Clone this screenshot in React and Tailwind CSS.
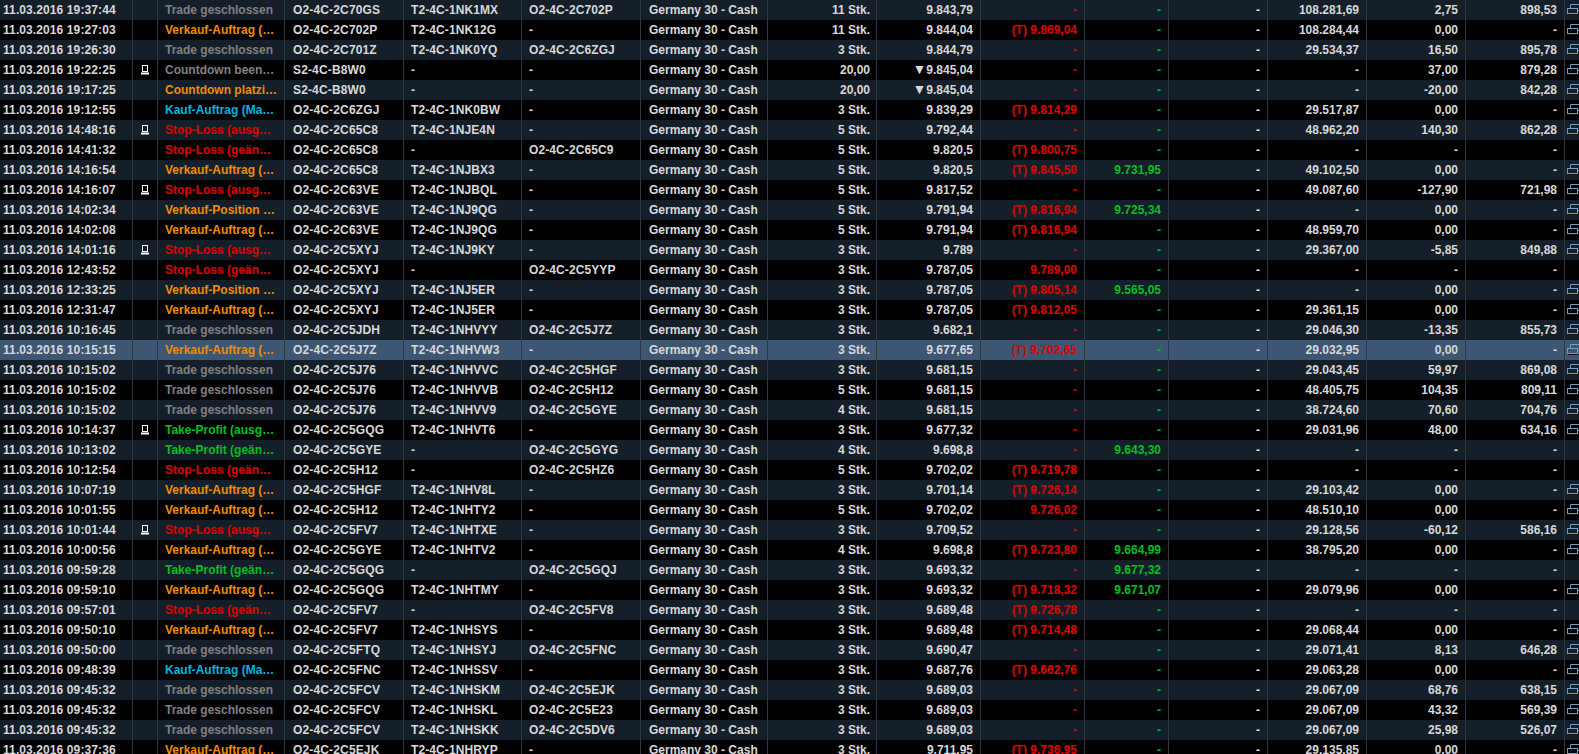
import React from "react";

const statusColors = {
  trade: "text-[#808080]",
  sell: "text-[#f08c00]",
  buy: "text-[#00b4e0]",
  stop: "text-[#e00000]",
  take: "text-[#00c020]",
};

const labels = {
  trade: "Trade geschlossen",
  sell: "Verkauf-Auftrag (…",
  buy: "Kauf-Auftrag (Ma…",
  stopOut: "Stop-Loss (ausg…",
  stopMod: "Stop-Loss (geän…",
  takeOut: "Take-Profit (ausg…",
  takeMod: "Take-Profit (geän…",
  sellPos: "Verkauf-Position …",
};

// time, pc, kind, label, order, trade, linked, qty, price, stop, limit, value, pnl, balance, link
const rows = [
  ["19:37:44", 0, "trade", labels.trade, "O2-4C-2C70GS", "T2-4C-1NK1MX", "O2-4C-2C702P", "11 Stk.", "9.843,79", "-", "-", "108.281,69", "2,75", "898,53", 1],
  ["19:27:03", 0, "sell", labels.sell, "O2-4C-2C702P", "T2-4C-1NK12G", "-", "11 Stk.", "9.844,04", "(T) 9.869,04", "-", "108.284,44", "0,00", "-", 1],
  ["19:26:30", 0, "trade", labels.trade, "O2-4C-2C701Z", "T2-4C-1NK0YQ", "O2-4C-2C6ZGJ", "3 Stk.", "9.844,79", "-", "-", "29.534,37", "16,50", "895,78", 1],
  ["19:22:25", 1, "trade", "Countdown been…", "S2-4C-B8W0", "-", "-", "20,00", "▼9.845,04", "-", "-", "-", "37,00", "879,28", 1],
  ["19:17:25", 0, "sell", "Countdown platzi…", "S2-4C-B8W0", "-", "-", "20,00", "▼9.845,04", "-", "-", "-", "-20,00", "842,28", 1],
  ["19:12:55", 0, "buy", labels.buy, "O2-4C-2C6ZGJ", "T2-4C-1NK0BW", "-", "3 Stk.", "9.839,29", "(T) 9.814,29", "-", "29.517,87", "0,00", "-", 1],
  ["14:48:16", 1, "stop", labels.stopOut, "O2-4C-2C65C8", "T2-4C-1NJE4N", "-", "5 Stk.", "9.792,44", "-", "-", "48.962,20", "140,30", "862,28", 1],
  ["14:41:32", 0, "stop", labels.stopMod, "O2-4C-2C65C8", "-", "O2-4C-2C65C9", "5 Stk.", "9.820,5", "(T) 9.800,75", "-", "-", "-", "-", 0],
  ["14:16:54", 0, "sell", labels.sell, "O2-4C-2C65C8", "T2-4C-1NJBX3", "-", "5 Stk.", "9.820,5", "(T) 9.845,50", "9.731,95", "49.102,50", "0,00", "-", 1],
  ["14:16:07", 1, "stop", labels.stopOut, "O2-4C-2C63VE", "T2-4C-1NJBQL", "-", "5 Stk.", "9.817,52", "-", "-", "49.087,60", "-127,90", "721,98", 1],
  ["14:02:34", 0, "sell", labels.sellPos, "O2-4C-2C63VE", "T2-4C-1NJ9QG", "-", "5 Stk.", "9.791,94", "(T) 9.816,94", "9.725,34", "-", "0,00", "-", 1],
  ["14:02:08", 0, "sell", labels.sell, "O2-4C-2C63VE", "T2-4C-1NJ9QG", "-", "5 Stk.", "9.791,94", "(T) 9.816,94", "-", "48.959,70", "0,00", "-", 1],
  ["14:01:16", 1, "stop", labels.stopOut, "O2-4C-2C5XYJ", "T2-4C-1NJ9KY", "-", "3 Stk.", "9.789", "-", "-", "29.367,00", "-5,85", "849,88", 1],
  ["12:43:52", 0, "stop", labels.stopMod, "O2-4C-2C5XYJ", "-", "O2-4C-2C5YYP", "3 Stk.", "9.787,05", "9.789,00", "-", "-", "-", "-", 0],
  ["12:33:25", 0, "sell", labels.sellPos, "O2-4C-2C5XYJ", "T2-4C-1NJ5ER", "-", "3 Stk.", "9.787,05", "(T) 9.805,14", "9.565,05", "-", "0,00", "-", 1],
  ["12:31:47", 0, "sell", labels.sell, "O2-4C-2C5XYJ", "T2-4C-1NJ5ER", "-", "3 Stk.", "9.787,05", "(T) 9.812,05", "-", "29.361,15", "0,00", "-", 1],
  ["10:16:45", 0, "trade", labels.trade, "O2-4C-2C5JDH", "T2-4C-1NHVYY", "O2-4C-2C5J7Z", "3 Stk.", "9.682,1", "-", "-", "29.046,30", "-13,35", "855,73", 1],
  ["10:15:15", 0, "sell", labels.sell, "O2-4C-2C5J7Z", "T2-4C-1NHVW3", "-", "3 Stk.", "9.677,65", "(T) 9.702,65", "-", "29.032,95", "0,00", "-", 1],
  ["10:15:02", 0, "trade", labels.trade, "O2-4C-2C5J76", "T2-4C-1NHVVC", "O2-4C-2C5HGF", "3 Stk.", "9.681,15", "-", "-", "29.043,45", "59,97", "869,08", 1],
  ["10:15:02", 0, "trade", labels.trade, "O2-4C-2C5J76", "T2-4C-1NHVVB", "O2-4C-2C5H12", "5 Stk.", "9.681,15", "-", "-", "48.405,75", "104,35", "809,11", 1],
  ["10:15:02", 0, "trade", labels.trade, "O2-4C-2C5J76", "T2-4C-1NHVV9", "O2-4C-2C5GYE", "4 Stk.", "9.681,15", "-", "-", "38.724,60", "70,60", "704,76", 1],
  ["10:14:37", 1, "take", labels.takeOut, "O2-4C-2C5GQG", "T2-4C-1NHVT6", "-", "3 Stk.", "9.677,32", "-", "-", "29.031,96", "48,00", "634,16", 1],
  ["10:13:02", 0, "take", labels.takeMod, "O2-4C-2C5GYE", "-", "O2-4C-2C5GYG", "4 Stk.", "9.698,8", "-", "9.643,30", "-", "-", "-", 0],
  ["10:12:54", 0, "stop", labels.stopMod, "O2-4C-2C5H12", "-", "O2-4C-2C5HZ6", "5 Stk.", "9.702,02", "(T) 9.719,78", "-", "-", "-", "-", 0],
  ["10:07:19", 0, "sell", labels.sell, "O2-4C-2C5HGF", "T2-4C-1NHV8L", "-", "3 Stk.", "9.701,14", "(T) 9.726,14", "-", "29.103,42", "0,00", "-", 1],
  ["10:01:55", 0, "sell", labels.sell, "O2-4C-2C5H12", "T2-4C-1NHTY2", "-", "5 Stk.", "9.702,02", "9.726,02", "-", "48.510,10", "0,00", "-", 1],
  ["10:01:44", 1, "stop", labels.stopOut, "O2-4C-2C5FV7", "T2-4C-1NHTXE", "-", "3 Stk.", "9.709,52", "-", "-", "29.128,56", "-60,12", "586,16", 1],
  ["10:00:56", 0, "sell", labels.sell, "O2-4C-2C5GYE", "T2-4C-1NHTV2", "-", "4 Stk.", "9.698,8", "(T) 9.723,80", "9.664,99", "38.795,20", "0,00", "-", 1],
  ["09:59:28", 0, "take", labels.takeMod, "O2-4C-2C5GQG", "-", "O2-4C-2C5GQJ", "3 Stk.", "9.693,32", "-", "9.677,32", "-", "-", "-", 0],
  ["09:59:10", 0, "sell", labels.sell, "O2-4C-2C5GQG", "T2-4C-1NHTMY", "-", "3 Stk.", "9.693,32", "(T) 9.718,32", "9.671,07", "29.079,96", "0,00", "-", 1],
  ["09:57:01", 0, "stop", labels.stopMod, "O2-4C-2C5FV7", "-", "O2-4C-2C5FV8", "3 Stk.", "9.689,48", "(T) 9.726,78", "-", "-", "-", "-", 0],
  ["09:50:10", 0, "sell", labels.sell, "O2-4C-2C5FV7", "T2-4C-1NHSYS", "-", "3 Stk.", "9.689,48", "(T) 9.714,48", "-", "29.068,44", "0,00", "-", 1],
  ["09:50:00", 0, "trade", labels.trade, "O2-4C-2C5FTQ", "T2-4C-1NHSYJ", "O2-4C-2C5FNC", "3 Stk.", "9.690,47", "-", "-", "29.071,41", "8,13", "646,28", 1],
  ["09:48:39", 0, "buy", labels.buy, "O2-4C-2C5FNC", "T2-4C-1NHSSV", "-", "3 Stk.", "9.687,76", "(T) 9.662,76", "-", "29.063,28", "0,00", "-", 1],
  ["09:45:32", 0, "trade", labels.trade, "O2-4C-2C5FCV", "T2-4C-1NHSKM", "O2-4C-2C5EJK", "3 Stk.", "9.689,03", "-", "-", "29.067,09", "68,76", "638,15", 1],
  ["09:45:32", 0, "trade", labels.trade, "O2-4C-2C5FCV", "T2-4C-1NHSKL", "O2-4C-2C5E23", "3 Stk.", "9.689,03", "-", "-", "29.067,09", "43,32", "569,39", 1],
  ["09:45:32", 0, "trade", labels.trade, "O2-4C-2C5FCV", "T2-4C-1NHSKK", "O2-4C-2C5DV6", "3 Stk.", "9.689,03", "-", "-", "29.067,09", "25,98", "526,07", 1],
  ["09:37:36", 0, "sell", labels.sell, "O2-4C-2C5EJK", "T2-4C-1NHRYP", "-", "3 Stk.", "9.711,95", "(T) 9.736,95", "-", "29.135,85", "0,00", "-", 1],
];

function ComputerIcon() {
  return (
    <svg width="8" height="10" viewBox="0 0 8 10" className="block">
      <rect x="1.5" y="0.5" width="5" height="6" fill="none" stroke="#ffffff" />
      <rect x="0" y="7.5" width="8" height="2" fill="#ffffff" />
    </svg>
  );
}

function LinkIcon() {
  return (
    <svg width="14" height="12" viewBox="0 0 14 12" className="block">
      <path d="M1 10.5 H11.5" fill="none" stroke="#0b1118" />
      <path d="M3.5 4 V0.5 H14 M14 6.5 H10.5" fill="none" stroke="#6f9fbf" />
      <rect x="0.5" y="4.5" width="10" height="5" fill="none" stroke="#6f9fbf" />
    </svg>
  );
}

function Cell({ className = "", children }) {
  return (
    <div className={`h-5 leading-5 border-r border-[#2d3642] whitespace-nowrap overflow-hidden ${className}`}>
      {children}
    </div>
  );
}

function Price({ value }) {
  if (!value.startsWith("▼")) return value;
  return (
    <>
      <span className="text-[14px] leading-none">▼</span>
      {value.slice(1)}
    </>
  );
}

function Row({ row, index }) {
  const [time, pc, kind, label, order, trade, linked, qty, price, stop, limit, value, pnl, balance, link] = row;
  const bg = index === 17 ? "bg-[#3d5674]" : index % 2 === 0 ? "bg-[#151f29]" : "bg-black";

  return (
    <div className={`grid grid-cols-[133px_25px_127px_119px_118px_119px_127px_109px_104px_104px_84px_99px_99px_99px_99px_15px] ${bg}`}>
      <Cell className="pl-[3px] tracking-[0.1px]">11.03.2016 {time}</Cell>
      <Cell className="pt-[5px] pl-[8px]">{pc ? <ComputerIcon /> : null}</Cell>
      <Cell className={`pl-[7px] ${statusColors[kind]}`}>{label}</Cell>
      <Cell className="pl-2 tracking-[0.15px]">{order}</Cell>
      <Cell className="pl-[7px] tracking-[0.1px]">{trade}</Cell>
      <Cell className="pl-[7px] tracking-[0.1px]">{linked}</Cell>
      <Cell className="pl-[8px]">Germany 30 - Cash</Cell>
      <Cell className="pr-[6px] text-right">{qty}</Cell>
      <Cell className="pr-[7px] text-right"><Price value={price} /></Cell>
      <Cell className="pr-[7px] text-right text-[#e00000]">{stop}</Cell>
      <Cell className="pr-[7px] text-right text-[#00c020]">{limit}</Cell>
      <Cell className="pr-[7px] text-right">-</Cell>
      <Cell className="pr-[7px] text-right">{value}</Cell>
      <Cell className="pr-[7px] text-right">{pnl}</Cell>
      <Cell className="pr-[7px] text-right">{balance}</Cell>
      <div className="h-5 pl-[2px] pt-1 overflow-hidden">{link ? <LinkIcon /> : null}</div>
    </div>
  );
}

export default function App() {
  return (
    <div className="h-screen overflow-hidden bg-black text-[12px] font-bold text-[#d8d8d8] font-['Liberation_Sans',Arial,sans-serif]">
      {rows.map((row, i) => (
        <Row key={i} row={row} index={i} />
      ))}
    </div>
  );
}
